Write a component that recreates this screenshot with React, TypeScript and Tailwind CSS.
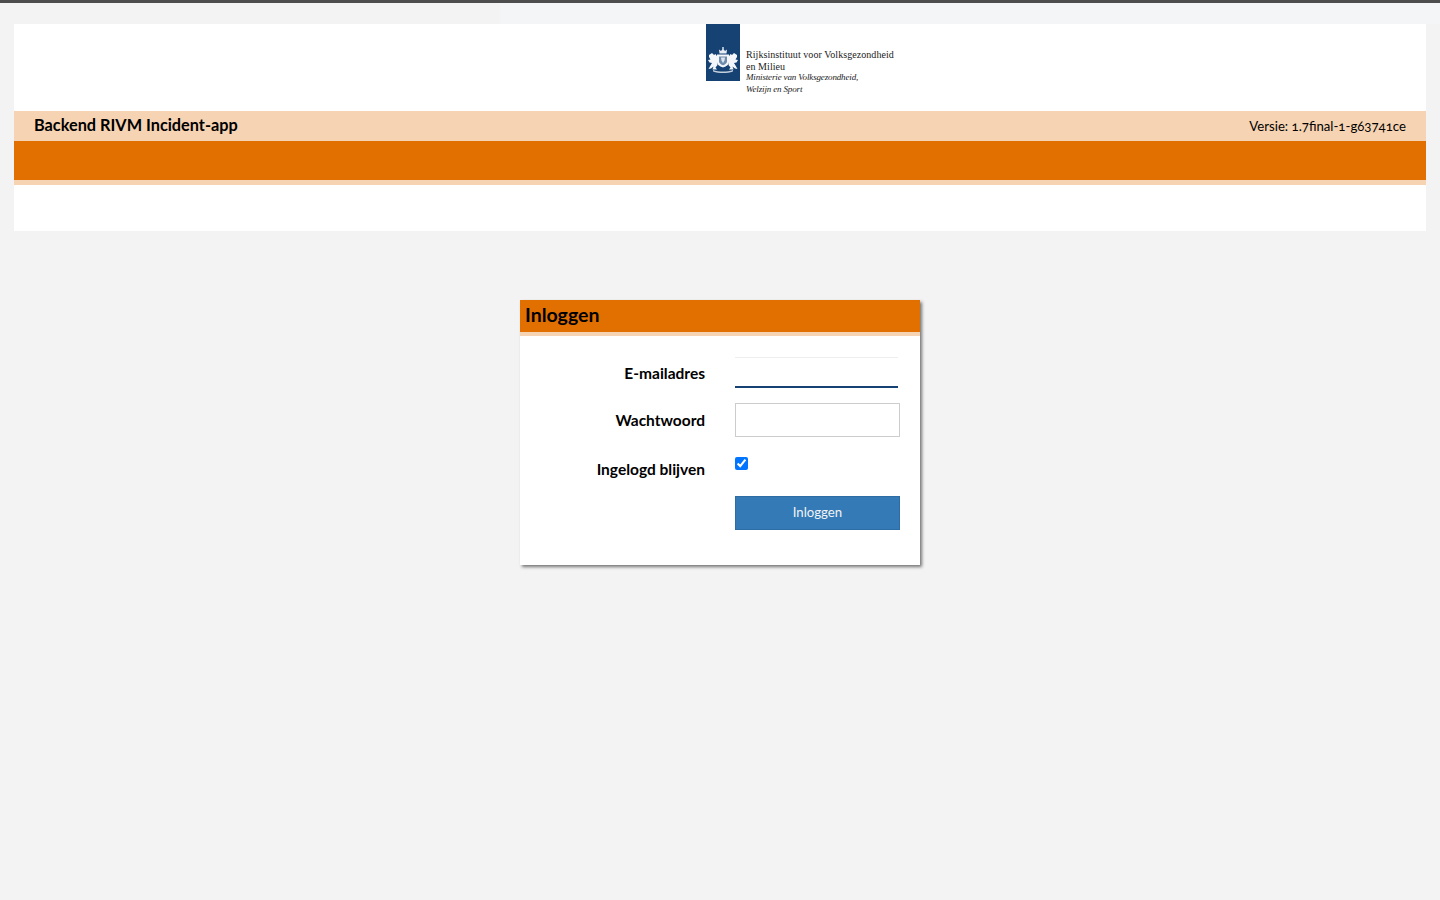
import { useState } from 'react';

const fontClass = "font-['Lato','Noto_Sans',sans-serif]";

function Crest() {
  return (
    <svg viewBox="0 0 34 57" className="block h-[57px] w-[34px]">
      <rect width="34" height="57" fill="#154273" />
      {/* crown */}
      <path d="M13.5 29.5 L13 25.5 L15 27 L17 24.5 L19 27 L21 25.5 L20.5 29.5 Z" fill="#e8edf3" />
      <circle cx="17" cy="24" r="0.9" fill="#e8edf3" />
      {/* shield */}
      <path d="M11 30.5 H23 V38 C23 41 20 42.5 17 43.5 C14 42.5 11 41 11 38 Z" fill="#f4f6f9" />
      <path d="M13 32.5 H21 V37.5 C21 39.4 18.8 40.6 17 41.2 C15.2 40.6 13 39.4 13 37.5 Z" fill="#6f8bab" />
      <path d="M15 33.5 L19 33.5 L18.5 36.5 L17 39 L15.5 36.5 Z" fill="#dfe6ee" />
      {/* left lion */}
      <path d="M3 31 L6 29 L8 31 L9.5 30 L11.5 33 L11 37 L11.5 41 L9.5 43.5 L11 45.5 L6.5 45.5 L7.5 42.5 L5 44.5 L2.5 45 L4.5 41.5 L6 39 L3.5 38.5 L2 36 L4.5 35.5 L3 33 Z" fill="#f4f6f9" />
      {/* right lion */}
      <path d="M31 31 L28 29 L26 31 L24.5 30 L22.5 33 L23 37 L22.5 41 L24.5 43.5 L23 45.5 L27.5 45.5 L26.5 42.5 L29 44.5 L31.5 45 L29.5 41.5 L28 39 L30.5 38.5 L32 36 L29.5 35.5 L31 33 Z" fill="#f4f6f9" />
      {/* ribbon */}
      <path d="M7 46 C13 48 21 48 27 46 L27 47.5 C21 49.5 13 49.5 7 47.5 Z" fill="#c5d0de" />
    </svg>
  );
}

function Logo() {
  return (
    <div className="flex items-start gap-[6px] pl-[692px]">
      <Crest />
      <div className="whitespace-nowrap pt-[25px] font-['Liberation_Serif',serif] text-[10px] leading-[11.6px] text-[#222222]">
        <div className="tracking-[0.06px]">Rijksinstituut voor Volksgezondheid</div>
        <div className="tracking-[0.06px]">en Milieu</div>
        <div className="text-[9px] italic tracking-[-0.15px]">Ministerie van Volksgezondheid,</div>
        <div className="text-[9px] italic tracking-[-0.15px]">Welzijn en Sport</div>
      </div>
    </div>
  );
}

export default function App() {
  const [stayLoggedIn, setStayLoggedIn] = useState(true);

  return (
    <div className={`min-h-[900px] bg-[#f3f3f3] ${fontClass} text-black`}>
      {/* Top bar */}
      <div className="h-[3px] bg-[#4d4d4d]" />
      <div className="flex h-[21px]">
        <div className="w-[500px]" />
        <div className="flex-1 bg-[#f4f5f7]" />
      </div>

      {/* Header */}
      <header className="mx-[14px] bg-white">
        <div className="h-[87px]">
          <Logo />
        </div>
        <div className="flex h-[30px] items-center justify-between bg-[#f5d3b3] px-[20px] pb-[2px]">
          <span className="text-[16.3px] font-bold">Backend RIVM Incident-app</span>
          <span className="mt-[3px] text-[13.2px] oldstyle-nums">Versie: 1.7final-1-g63741ce</span>
        </div>
        <div className="h-[39px] bg-[#e17000]" />
        <div className="h-[5px] bg-[#f5d3b3]" />
        <div className="h-[46px]" />
      </header>

      {/* Login */}
      <div className="mx-auto mt-[69px] h-[265px] w-[400px] bg-white shadow-[2px_2px_3px_#777777]">
        <h1 className="h-[36px] border-b-4 border-[#f5d3b3] bg-[#e17000] pl-[5px] text-[19.5px] font-bold leading-[30px]">
          Inloggen
        </h1>
        <form className="pt-[21px]">
          <div className="grid h-[31px] grid-cols-[175px_165px] gap-x-[30px] pl-[10px]">
            <label className="pt-[2px] text-right text-[15.5px] font-bold leading-[28px]">E-mailadres</label>
            <input
              type="email"
              className="h-[31px] w-[163px] border-t border-b-2 border-t-[#eeeeee] border-b-[#154273] bg-white outline-none"
            />
          </div>
          <div className="mt-[15px] grid h-[34px] grid-cols-[175px_165px] gap-x-[30px] pl-[10px]">
            <label className="text-right text-[15.5px] font-bold leading-[35px]">Wachtwoord</label>
            <input type="password" className="h-[34px] w-[165px] border border-[#cccccc] bg-white outline-none" />
          </div>
          <div className="mt-[15px] grid h-[29px] grid-cols-[175px_165px] gap-x-[30px] pl-[10px]">
            <label className="text-right text-[15.5px] font-bold leading-[34px]">Ingelogd blijven</label>
            <div className="pt-[5px]">
              <input
                type="checkbox"
                checked={stayLoggedIn}
                onChange={(e) => setStayLoggedIn(e.target.checked)}
                className="m-0 block h-[13px] w-[13px]"
              />
            </div>
          </div>
          <div className="mt-[15px] grid grid-cols-[175px_165px] gap-x-[30px] pl-[10px]">
            <div />
            <button
              type="button"
              className="h-[34px] w-[165px] border border-[#2e6da4] bg-[#337ab7] pb-[1px] text-[13.2px] text-[#f2f2f2]"
            >
              Inloggen
            </button>
          </div>
        </form>
      </div>
    </div>
  );
}
